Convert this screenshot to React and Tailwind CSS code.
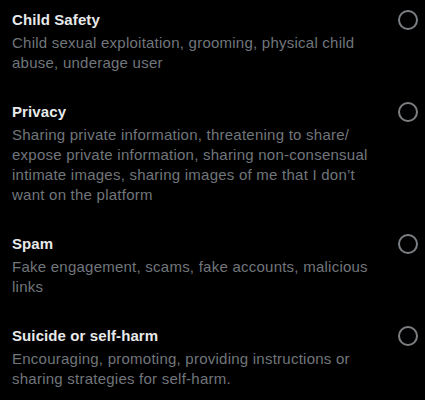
import React from 'react';

const reasons = [
  {
    title: 'Child Safety',
    description: 'Child sexual exploitation, grooming, physical child abuse, underage user',
  },
  {
    title: 'Privacy',
    description:
      'Sharing private information, threatening to share/ expose private information, sharing non-consensual intimate images, sharing images of me that I don\u2019t want on the platform',
  },
  {
    title: 'Spam',
    description: 'Fake engagement, scams, fake accounts, malicious links',
  },
  {
    title: 'Suicide or self-harm',
    description: 'Encouraging, promoting, providing instructions or sharing strategies for self-harm.',
  },
];

const App = () => {
  return (
    <div
      className="min-h-screen w-[425px] bg-black pt-[10px]"
      style={{ fontFamily: '"Liberation Sans", Arial, sans-serif' }}
    >
      {reasons.map(reason => (
        <label key={reason.title} className="flex items-start justify-between pl-3 pr-[7px] pb-[29px]">
          <div className="flex-1 pr-4">
            <div className="text-[15px] leading-5 font-bold tracking-[0.1px] text-[#e7e9ea]">{reason.title}</div>
            <div className="mt-[3px] text-[15px] leading-5 tracking-[0.24px] text-[#71767b]">{reason.description}</div>
          </div>
          <span className="block w-5 h-5 rounded-full border-2 border-[#7c8085] shrink-0" />
        </label>
      ))}
    </div>
  );
};

export default App;
